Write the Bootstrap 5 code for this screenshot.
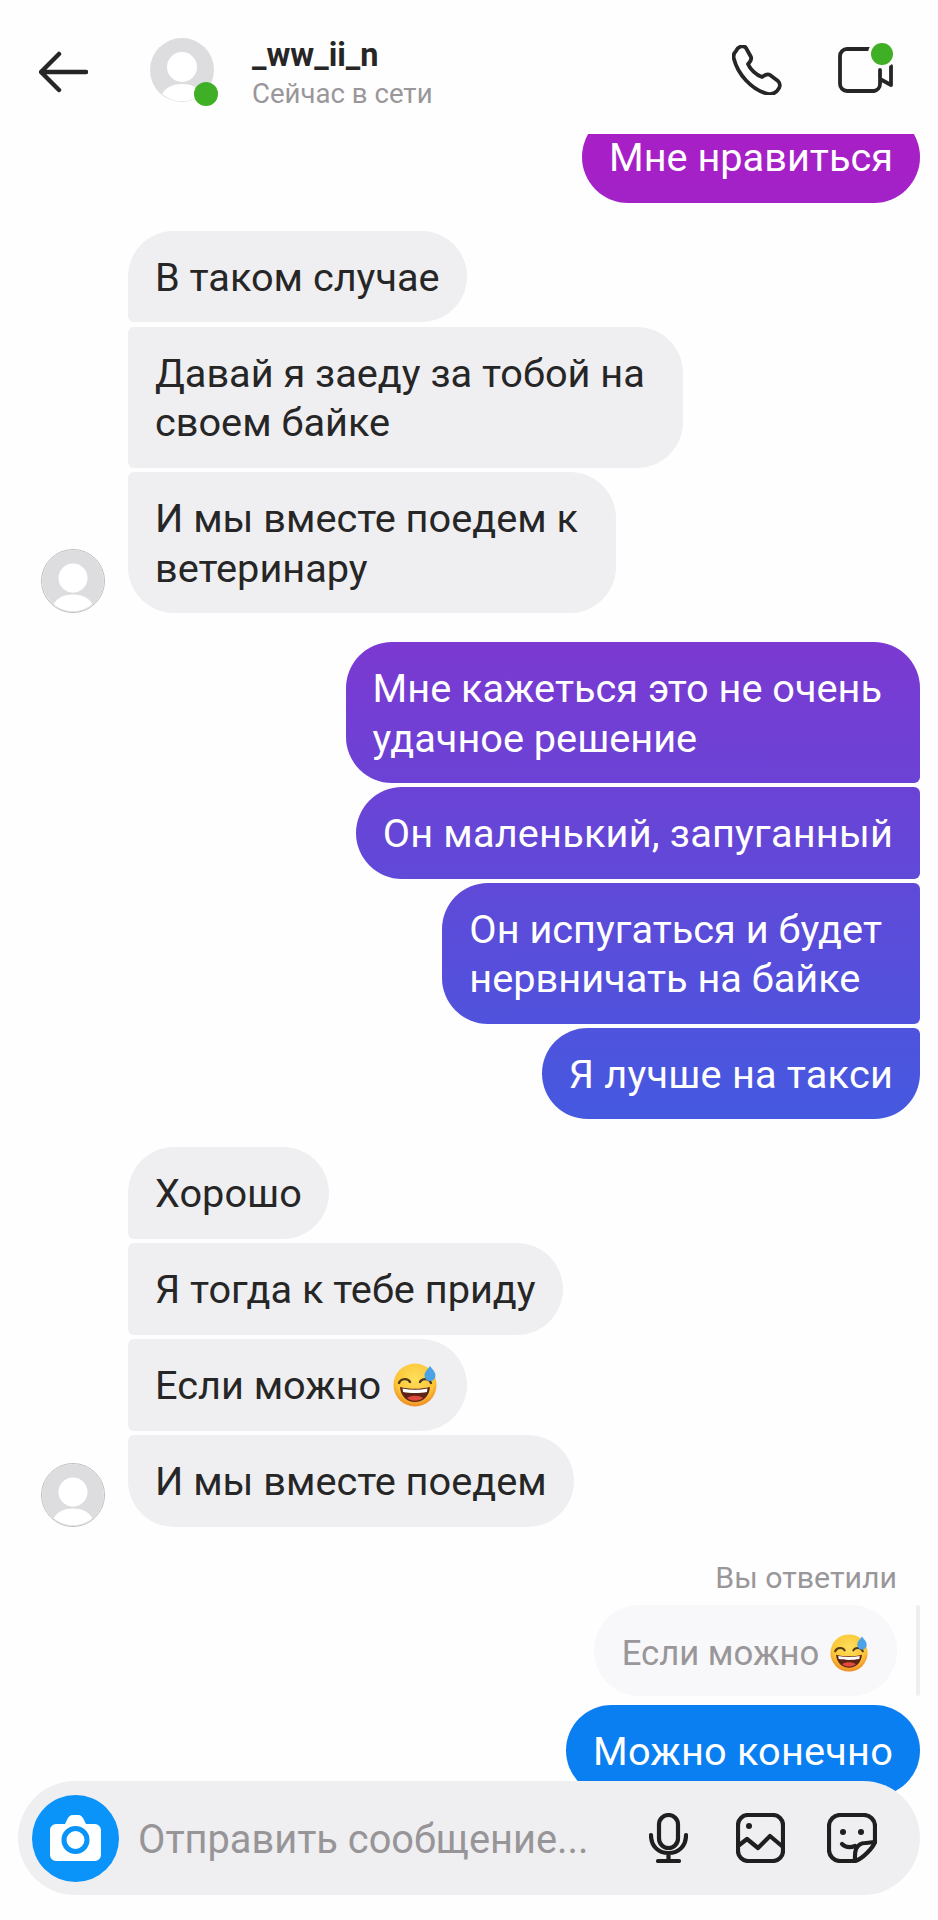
<!DOCTYPE html>
<html lang="ru">
<head>
    <meta charset="UTF-8">
    <meta name="viewport" content="width=device-width, initial-scale=1.0">
    <title>Чат</title>
    <link href="https://cdn.jsdelivr.net/npm/bootstrap@5.3.0/dist/css/bootstrap.min.css" rel="stylesheet">
    <style>
        html, body { background: #fffeff; }
        body { font-family: Roboto, "Liberation Sans", sans-serif; color: #262626; }
        .screen { position: relative; width: 938px; height: 1920px; overflow: hidden; }

        .top-bar { height: 134px; padding: 38px 45px 0 39px; background: #fffeff; }
        .back-btn { width: 49px; height: 64px; margin-right: 62px; }
        .head-ava { position: relative; width: 64px; height: 64px; margin-right: 38px; }
        .online-dot { position: absolute; right: -4px; bottom: -4px; width: 24px; height: 24px; border-radius: 50%; background: #3fb025; }
        .live-dot { top: 5px; right: 0; bottom: auto; width: 22px; height: 22px; box-shadow: 0 0 0 3px #fffeff; }
        .peer-name { font-size: 32.5px; font-weight: 700; line-height: 34px; }
        .peer-status { font-size: 27.6px; line-height: 34px; margin-top: 5px; color: #999799; }
        .call-btn { width: 50px; height: 50px; margin-right: 56px; margin-top: 7px; }
        .video-btn { width: 55px; height: 50px; margin-top: 8px; }

        .chat { height: 1786px; overflow: hidden; padding: 0 18px 0 41px; }
        .msg-group { gap: 4px; }
        .left-group { gap: 4.5px; }
        .first-row { margin-top: -23px; }
        .gap-left { margin-top: 28px; }
        .gap-right { margin-top: 29px; }
        .bubble { font-size: 39.7px; line-height: 49.5px; padding: 22px 27px 20px; white-space: nowrap; }
        .bubble.wrapped { padding-right: 38px; }
        .bubble.with-emoji { padding-right: 30px; }
        .bubble.roomy { letter-spacing: 0.2px; }
        .them { background: #efeef1; color: #262626; border-radius: 6px 46px 46px 6px; }
        .them.first { border-top-left-radius: 46px; }
        .them.last { border-bottom-left-radius: 46px; }
        .me { color: #fff; border-radius: 46px 6px 6px 46px;
            background-image: linear-gradient(180deg, #a81fc6 134px, #7b39d1 642px, #4559e0 1119px, #0a7ff2 1704px);
            background-attachment: fixed; }
        .me.first { border-top-right-radius: 46px; }
        .me.last { border-bottom-right-radius: 46px; }
        .solo { border-radius: 46px; }

        .small-ava { width: 64px; height: 64px; margin-right: 23px; flex: none; border: 1px solid #bdbcbe; border-radius: 50%; }
        .emoji { width: 44px; height: 44px; vertical-align: -8px; margin-left: 2px; }

        .reply-note { font-size: 30.3px; line-height: 34px; color: #999799; padding-right: 23px; margin-top: 34px; }
        .reply-wrap { margin-top: 10px; }
        .reply-bubble { font-size: 34.7px; line-height: 41px; color: #999799; background: #f8f7f9; border-radius: 46px; padding: 28px 29px 22px 28px; margin-right: 19px; white-space: nowrap; }
        .reply-bubble .emoji { width: 38px; height: 38px; vertical-align: -7px; }
        .reply-line { width: 4px; background: #efeef1; border-radius: 2px; }
        .blue-row { margin-top: 9px; }

        .composer { position: absolute; left: 18px; top: 1781px; width: 902px; height: 114px; border-radius: 57px; background: #efeef1; padding: 0 43px 0 14px; }
        .cam-btn { width: 87px; height: 87px; border-radius: 50%; background: #0a93f8; margin-right: 19px; }
        .composer-text { font-size: 39.8px; color: #979598; padding-top: 3px; }
        .gap-mic { margin-right: 48px; }
        .gap-pic { margin-right: 42px; }
    </style>
</head>
<body>
<svg width="0" height="0" class="d-block">
    <defs>
        <radialGradient id="faceFill" cx="50%" cy="35%" r="65%">
            <stop offset="0" stop-color="#ffdf5c"/>
            <stop offset="0.7" stop-color="#fbc537"/>
            <stop offset="1" stop-color="#ee8a22"/>
        </radialGradient>
        <symbol id="sweatFace" viewBox="0 0 44 44">
            <circle cx="22" cy="22" r="21.5" fill="url(#faceFill)"/>
            <path d="M6 20c2-5 9-5 11-1M27 19c2-4 9-4 11 1" fill="none" stroke="#50381c" stroke-width="2.4" stroke-linecap="round"/>
            <path d="M7 24c9 2.4 21 2.4 30 0-.5 9-7 15-15 15S7.5 33 7 24z" fill="#5d2416"/>
            <path d="M9.5 25.5c8 1.6 17 1.6 25 0l-.6 3.5c-7 1.3-17 1.3-23.8 0z" fill="#fff"/>
            <path d="M14 35c4-3 12-3 16 0-4 3.6-12 3.6-16 0z" fill="#e2483c"/>
            <path d="M37 3c2.5 3.5 5.5 6 5.5 9.5a5.5 5.5 0 0 1-11 0C31.5 9 34.5 6.500 37 3z" fill="#4aa3e6"/>
        </symbol>
        <symbol id="avatarPic" viewBox="0 0 64 64">
            <circle cx="32" cy="32" r="32" fill="#dddcde"/>
            <circle cx="32" cy="29" r="15" fill="#fff"/>
            <path d="M12 56c4-7 11-10 20-10s16 3 20 10a31 31 0 0 1-40 0z" fill="#fff"/>
        </symbol>
    </defs>
</svg>

<div class="screen">
    <div class="top-bar d-flex align-items-start">
        <svg class="back-btn" viewBox="0 0 49 64" fill="none" stroke="#262626" stroke-width="4.5" stroke-linecap="round" stroke-linejoin="round">
            <path d="M47 34H3M20 16 2 34l18 18"/>
        </svg>
        <div class="head-ava">
            <svg width="64" height="64"><use href="#avatarPic"/></svg>
            <span class="online-dot"></span>
        </div>
        <div class="flex-grow-1">
            <div class="peer-name">_ww_ii_n</div>
            <div class="peer-status">Сейчас в сети</div>
        </div>
        <svg class="call-btn" viewBox="0 0 50 50" fill="none" stroke="#262626" stroke-width="3.8" stroke-linejoin="round">
            <path d="M4 6C6 1 12 0 14 3l5 9c1 3-1 5-3 7 2 5 8 11 14 13 3-2 5-4 8-2l8 6c3 3 2 7-1 10-3 3-7 4-12 2C20 44 6 30 2 14 1 11 2 8 4 6z"/>
        </svg>
        <div class="position-relative">
            <svg class="video-btn d-block" viewBox="0 0 55 50" fill="none" stroke="#262626" stroke-width="3.8" stroke-linecap="round" stroke-linejoin="round">
                <path d="M31 3H9a7 7 0 0 0-7 7v28a7 7 0 0 0 7 7h27a7 7 0 0 0 6-7V24M42 33l11 6V20"/>
            </svg>
            <span class="online-dot live-dot"></span>
        </div>
    </div>

    <div class="chat d-flex flex-column">
        <div class="d-flex justify-content-end first-row">
            <div class="bubble me solo">Мне нравиться</div>
        </div>

        <div class="d-flex align-items-end gap-left">
            <svg class="small-ava"><use href="#avatarPic"/></svg>
            <div class="d-flex flex-column align-items-start left-group">
                <div class="bubble them first">В таком случае</div>
                <div class="bubble them wrapped">Давай я заеду за тобой на<br>своем байке</div>
                <div class="bubble them last wrapped">И мы вместе поедем к<br>ветеринару</div>
            </div>
        </div>

        <div class="d-flex flex-column align-items-end msg-group gap-right">
            <div class="bubble me first wrapped">Мне кажеться это не очень<br>удачное решение</div>
            <div class="bubble me roomy">Он маленький, запуганный</div>
            <div class="bubble me wrapped">Он испугаться и будет<br>нервничать на байке</div>
            <div class="bubble me last roomy">Я лучше на такси</div>
        </div>

        <div class="d-flex align-items-end gap-left">
            <svg class="small-ava"><use href="#avatarPic"/></svg>
            <div class="d-flex flex-column align-items-start left-group">
                <div class="bubble them first">Хорошо</div>
                <div class="bubble them">Я тогда к тебе приду</div>
                <div class="bubble them with-emoji">Если можно <svg class="emoji"><use href="#sweatFace"/></svg></div>
                <div class="bubble them last">И мы вместе поедем</div>
            </div>
        </div>

        <div class="reply-note text-end">Вы ответили</div>
        <div class="d-flex justify-content-end reply-wrap">
            <div class="reply-bubble">Если можно <svg class="emoji"><use href="#sweatFace"/></svg></div>
            <div class="reply-line"></div>
        </div>
        <div class="d-flex justify-content-end blue-row">
            <div class="bubble me solo roomy">Можно конечно</div>
        </div>
    </div>

    <div class="composer d-flex align-items-center">
        <div class="cam-btn d-flex align-items-center justify-content-center flex-shrink-0">
            <svg width="51" height="46" viewBox="0 0 51 46">
                <path d="M6 9h9l2-4c1-3 3-5 6-5h5c3 0 5 2 6 5l2 4h9c3 0 6 3 6 6v25c0 3-3 6-6 6H6c-3 0-6-3-6-6V15c0-3 3-6 6-6z" fill="#fff"/>
                <circle cx="25.5" cy="25" r="11.5" fill="none" stroke="#0a93f8" stroke-width="5"/>
            </svg>
        </div>
        <span class="composer-text flex-grow-1">Отправить сообщение...</span>
        <svg class="gap-mic" width="39" height="50" viewBox="0 0 39 50" fill="none" stroke="#1f1f1f" stroke-width="4.2" stroke-linecap="round" stroke-linejoin="round">
            <rect x="10" y="2" width="19" height="33" rx="9.5"/>
            <path d="M2 22c0 11 7 18 17.5 18S37 33 37 22M19.5 40v8M9 48h21"/>
        </svg>
        <svg class="gap-pic" width="49" height="50" viewBox="0 0 49 50" fill="none" stroke="#1f1f1f" stroke-width="4.2" stroke-linecap="round" stroke-linejoin="round">
            <rect x="2" y="2" width="45" height="46" rx="10"/>
            <circle cx="13" cy="13" r="3" fill="#1f1f1f" stroke="none"/>
            <path d="M2 33l9-7 11 9 12-12 13 11"/>
        </svg>
        <svg width="50" height="50" viewBox="0 0 50 50" fill="none" stroke="#1f1f1f" stroke-width="4.2" stroke-linecap="round" stroke-linejoin="round">
            <path d="M48 29V13c0-6-5-11-11-11H13C7 2 2 7 2 13v24c0 6 5 11 11 11h15c4-1 8-4 12-8s7-8 8-11z"/>
            <path d="M28 48c0-4-.5-8 1-12 2-4 6-6 9-6 3-.3 7-.5 10-1"/>
            <circle cx="16" cy="19" r="3" fill="#1f1f1f" stroke="none"/>
            <circle cx="34" cy="19" r="3" fill="#1f1f1f" stroke="none"/>
            <path d="M15 31c3 3 8 4 13 2"/>
        </svg>
    </div>
</div>

<script src="https://cdn.jsdelivr.net/npm/bootstrap@5.3.0/dist/js/bootstrap.bundle.min.js"></script>
</body>
</html>
